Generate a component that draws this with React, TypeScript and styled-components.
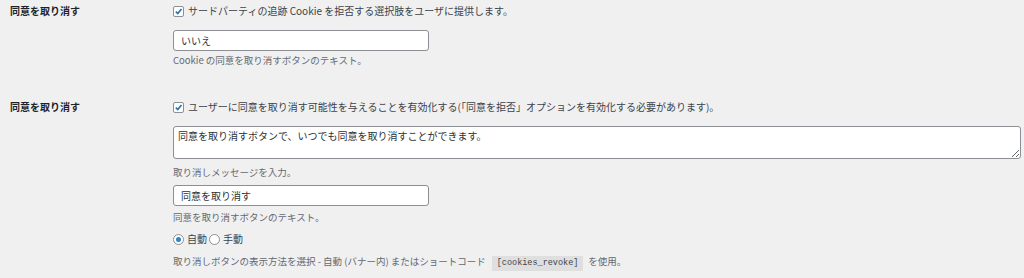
import React from "react";
import styled, { createGlobalStyle } from "styled-components";

const Global = createGlobalStyle`
  html, body { margin: 0; padding: 0; background: #f0f0f1; }
  body { font-family: "Noto Sans CJK JP", "Noto Sans", sans-serif; color: #3c434a; }
`;

const Page = styled.div`
  width: 1024px;
  height: 278px;
  box-sizing: border-box;
  padding: 4px 3px 0 10px;
  display: flex;
  flex-direction: column;
  gap: 33px;
  overflow: hidden;
`;

const Row = styled.div`
  display: grid;
  grid-template-columns: 163px 1fr;
  align-items: start;
`;

const Label = styled.div`
  font-size: 10px;
  line-height: 14px;
  font-weight: 700;
  color: #1d2327;
`;

const Field = styled.div`
  display: flex;
  flex-direction: column;
  align-items: flex-start;
`;

const CheckLine = styled.label`
  display: flex;
  align-items: center;
  gap: 4px;
  font-size: 10px;
  line-height: 14px;
  color: #3c434a;
  white-space: nowrap;
`;

const Box = styled.span`
  width: 11px;
  height: 11px;
  box-sizing: border-box;
  border: 1px solid #8c8f94;
  border-radius: 2px;
  background: #fff;
  display: inline-flex;
  align-items: center;
  justify-content: center;
  flex: none;
`;

const TextInput = styled.input<{ $mt: number }>`
  margin-top: ${(p) => p.$mt}px;
  width: 256px;
  height: 21px;
  box-sizing: border-box;
  border: 1px solid #8c8f94;
  border-radius: 3px;
  background: #fff;
  padding: 0 7px;
  font-family: "Noto Sans CJK JP", sans-serif;
  font-size: 10px;
  color: #2c3338;
  outline: none;
`;

const TextArea = styled.textarea`
  margin-top: 12px;
  width: 100%;
  height: 33px;
  box-sizing: border-box;
  border: 1px solid #8c8f94;
  border-radius: 3px;
  background: #fff;
  padding: 2px 4px;
  font-family: "Noto Sans CJK JP", sans-serif;
  font-size: 10px;
  line-height: 14px;
  color: #2c3338;
  resize: vertical;
  outline: none;
`;

const Description = styled.p<{ $mt: number }>`
  margin: ${(p) => p.$mt}px 0 0;
  font-size: 9.5px;
  line-height: 14px;
  color: #646970;
  white-space: nowrap;
`;

const RadioLine = styled.div`
  margin-top: 8px;
  display: flex;
  align-items: center;
  gap: 2px;
  font-size: 10px;
  line-height: 14px;
  color: #3c434a;
`;

const RadioItem = styled.label`
  display: flex;
  align-items: center;
  gap: 3px;
`;

const Radio = styled.span<{ $on?: boolean }>`
  width: 11px;
  height: 11px;
  box-sizing: border-box;
  border: 1px solid #8c8f94;
  border-radius: 50%;
  background: #fff;
  display: inline-flex;
  align-items: center;
  justify-content: center;
  &::after {
    content: "";
    width: 5px;
    height: 5px;
    border-radius: 50%;
    background: ${(p) => (p.$on ? "#3582c4" : "transparent")};
  }
`;

const Code = styled.code`
  font-family: "Liberation Mono", "DejaVu Sans Mono", monospace;
  font-size: 8.5px;
  background: rgba(0, 0, 0, 0.07);
  padding: 2px 5px 3px;
  margin: 0 5px 0 6px;
  color: #3c434a;
`;

const Check = () => (
  <Box>
    <svg width="9" height="9" viewBox="0 0 10 10">
      <path d="M2 5.2 L4.2 7.3 L8.3 2.2" fill="none" stroke="#2271b1" strokeWidth="1.8" />
    </svg>
  </Box>
);

export default function App() {
  return (
    <>
      <Global />
      <Page>
        <Row>
          <Label>同意を取り消す</Label>
          <Field>
            <CheckLine>
              <Check />
              サードパーティの追跡 Cookie を拒否する選択肢をユーザに提供します。
            </CheckLine>
            <TextInput $mt={12} defaultValue="いいえ" readOnly />
            <Description $mt={2}>Cookie の同意を取り消すボタンのテキスト。</Description>
          </Field>
        </Row>
        <Row>
          <Label>同意を取り消す</Label>
          <Field>
            <CheckLine>
              <Check />
              ユーザーに同意を取り消す可能性を与えることを有効化する(「同意を拒否」オプションを有効化する必要があります)。
            </CheckLine>
            <TextArea defaultValue="同意を取り消すボタンで、いつでも同意を取り消すことができます。" readOnly />
            <Description $mt={6}>取り消しメッセージを入力。</Description>
            <TextInput $mt={6} defaultValue="同意を取り消す" readOnly />
            <Description $mt={4}>同意を取り消すボタンのテキスト。</Description>
            <RadioLine>
              <RadioItem>
                <Radio $on />
                自動
              </RadioItem>
              <RadioItem>
                <Radio />
                手動
              </RadioItem>
            </RadioLine>
            <Description $mt={8}>
              取り消しボタンの表示方法を選択 - 自動 (バナー内) またはショートコード
              <Code>[cookies_revoke]</Code>
              を使用。
            </Description>
          </Field>
        </Row>
      </Page>
    </>
  );
}
